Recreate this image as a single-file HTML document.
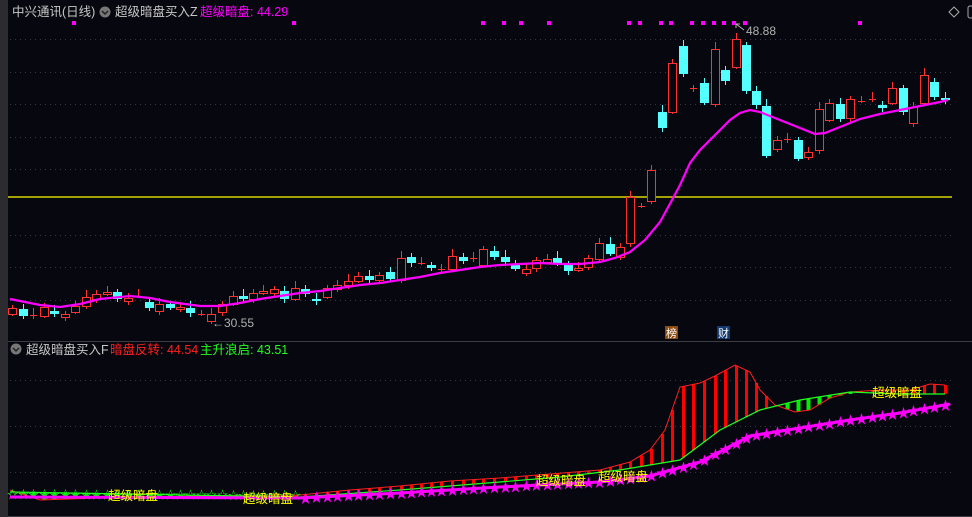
<!DOCTYPE html>
<html><head><meta charset="utf-8"><style>
html,body{margin:0;padding:0;background:#07070f;width:972px;height:517px;overflow:hidden}
svg{display:block}
text{font-family:"Liberation Sans","Noto Sans CJK SC",sans-serif}
</style></head><body>
<svg id="s" width="972" height="517" xmlns="http://www.w3.org/2000/svg">
<rect width="972" height="517" fill="#07070f"/>
<rect x="0" y="0" width="8" height="517" fill="#2b2b30"/>
<line x1="8" y1="341.5" x2="972" y2="341.5" stroke="#3c3c44"/>
<line x1="8" y1="516.5" x2="972" y2="516.5" stroke="#3c3c44"/>
<g stroke="#3a3a44" stroke-dasharray="1,4">
<line x1="10" y1="39.5" x2="952" y2="39.5"/><line x1="10" y1="72.5" x2="952" y2="72.5"/>
<line x1="10" y1="104.5" x2="952" y2="104.5"/><line x1="10" y1="137.5" x2="952" y2="137.5"/>
<line x1="10" y1="169.5" x2="952" y2="169.5"/><line x1="10" y1="235.5" x2="952" y2="235.5"/>
<line x1="10" y1="267.5" x2="952" y2="267.5"/><line x1="10" y1="300.5" x2="952" y2="300.5"/>
<line x1="10" y1="380.5" x2="952" y2="380.5"/><line x1="10" y1="426.5" x2="952" y2="426.5"/>
<line x1="10" y1="472.5" x2="952" y2="472.5"/>
</g>
<line x1="8" y1="197" x2="952" y2="197" stroke="#ffff00" stroke-width="1.2"/>
<text x="12" y="16" font-size="12.5" fill="#c8c8c8">中兴通讯(日线)</text>
<circle cx="105" cy="12" r="5.5" fill="#777"/><path d="M102 11l3 3 3-3" stroke="#222" stroke-width="1.5" fill="none"/>
<text x="115" y="16" font-size="12.5" fill="#c8c8c8">超级暗盘买入Z</text>
<text x="200" y="16" font-size="12.5" fill="#ff00ff">超级暗盘: 44.29</text>
<path d="M954 7l5 5-5 5-5-5z" stroke="#aaa" fill="none"/>
<rect x="968" y="6" width="8" height="12" rx="2" stroke="#aaa" fill="none"/>
<circle cx="16" cy="349" r="5.5" fill="#777"/><path d="M13 348l3 3 3-3" stroke="#222" stroke-width="1.5" fill="none"/>
<text x="26" y="354" font-size="12.5" fill="#c8c8c8">超级暗盘买入F</text>
<text x="110" y="354" font-size="12.5" fill="#ff2020">暗盘反转: 44.54</text>
<text x="200" y="354" font-size="12.5" fill="#20ff20">主升浪启: 43.51</text>
<rect x="665" y="326" width="13" height="13" fill="#8a4a10"/><text x="666" y="337" font-size="11" fill="#fff">榜</text>
<rect x="717" y="326" width="13" height="13" fill="#103a70"/><text x="718" y="337" font-size="11" fill="#fff">财</text>
<text x="746" y="35" font-size="12" fill="#b0b0b0">48.88</text>
<path d="M736 24l8 6M736 24l0 4M736 24l4 0" stroke="#b0b0b0" fill="none"/>
<text x="212" y="327" font-size="12" fill="#b0b0b0">←30.55</text>
<g id="c"></g>
</svg>
<script>
var S=document.getElementById('c'),h='';
function L(p){return p.map(function(q){return q.join(',')}).join(' ')}
function I(p,x){for(var i=0;i<p.length-1;i++){if(x>=p[i][0]&&x<=p[i+1][0]){var t=(x-p[i][0])/(p[i+1][0]-p[i][0]);return p[i][1]+t*(p[i+1][1]-p[i][1]);}}return x<p[0][0]?p[0][1]:p[p.length-1][1];}
var C=[[12,'r',308,314],[23,'c',309,316],[33,'x',315,315],[44,'r',307,316],[54,'c',311,314],[65,'r',314,317],[75,'r',306,312],[86,'r',297,306],[96,'r',294,299],[107,'r',292,294],[117,'c',292,299],[128,'r',298,301],[138,'x',296,296],[149,'c',302,308],[159,'r',304,311],[170,'c',304,308],[180,'r',307,309],[190,'c',308,313],[201,'x',314,314],[211,'r',314,321],[222,'r',304,312],[233,'r',296,304],[243,'c',296,299],[253,'r',293,299],[263,'r',291,293],[274,'r',289,293],[284,'c',291,299],[295,'r',288,299],[305,'c',289,294],[316,'c',299,301],[327,'r',288,297],[337,'r',285,289],[348,'r',281,285],[358,'r',276,281],[369,'c',276,280],[379,'r',275,280],[390,'c',272,279],[401,'r',258,280],[411,'c',257,263],[421,'x',263,263],[431,'c',265,268],[441,'x',269,269],[452,'r',256,269],[463,'c',257,261],[473,'x',258,258],[483,'r',249,265],[494,'c',251,257],[505,'c',257,262],[515,'c',264,269],[526,'r',269,273],[536,'r',260,268],[547,'r',259,262],[557,'c',258,263],[568,'c',265,271],[578,'r',268,270],[588,'r',258,267],[599,'r',243,259],[610,'c',244,254],[620,'r',247,257],[630,'r',197,243],[641,'x',206,206],[651,'r',170,201],[662,'c',112,128],[672,'r',63,112],[683,'c',46,74],[693,'x',88,88],[704,'c',83,103],[715,'r',49,104],[725,'c',70,81],[736,'r',39,67],[746,'c',45,91],[756,'c',91,105],[766,'c',106,156],[777,'r',140,149],[787,'x',139,139],[798,'c',140,159],[808,'r',152,157],[819,'r',109,150],[829,'r',103,120],[840,'c',104,119],[850,'r',99,118],[861,'x',101,101],[872,'x',99,99],[882,'c',105,108],[892,'r',88,103],[903,'c',88,112],[913,'r',107,123],[924,'r',75,103],[934,'c',82,97],[945,'c',98,100]];
C.forEach(function(c,i){var x=c[0],col=c[1]=='c'?'#54ffff':'#ff3232';var w=(i*7)%5+3;
h+='<line x1="'+(x+.5)+'" y1="'+(c[2]-w)+'" x2="'+(x+.5)+'" y2="'+(c[3]+(i%3+2))+'" stroke="'+col+'"/>';
if(c[1]=='x')h+='<line x1="'+(x-3)+'" y1="'+c[2]+'.5" x2="'+(x+4)+'" y2="'+c[2]+'.5" stroke="'+col+'"/>';
else if(c[1]=='c')h+='<rect x="'+(x-4)+'" y="'+c[2]+'" width="9" height="'+Math.max(2,c[3]-c[2])+'" fill="'+col+'"/>';
else h+='<rect x="'+(x-3.5)+'" y="'+(c[2]+.5)+'" width="8" height="'+Math.max(2,c[3]-c[2])+'" fill="#07070f" stroke="'+col+'"/>';});
var MA=[[10,299],[20,301],[40,305],[60,307],[80,304],[100,299],[130,296],[150,298],[170,302],[200,306],[220,306],[240,303],[260,299],[280,296],[300,293],[320,291],[340,288],[360,285],[380,283],[400,280],[420,277],[440,273],[460,270],[480,267],[500,265],[520,264],[540,263],[560,264],[580,264],[600,262],[615,258],[630,252],[645,240],[660,222],[672,200],[680,185],[690,163],[700,150],[710,140],[720,130],[730,120],[740,113],[750,110],[760,112],[780,120],[800,128],[815,134],[825,133],[840,127],[860,119],[880,114],[900,110],[920,106],[940,102],[948,100]];
h+='<polyline points="'+L(MA)+'" fill="none" stroke="#ff00ff" stroke-width="2.2"/>';
[74,294,483,504,521,549,629,640,661,671,692,703,714,724,734,745,860].forEach(function(x){h+='<rect x="'+(x-2)+'" y="21" width="4" height="4" fill="#ff00ff"/>';});
var ST=[[10,497],[300,498],[400,493],[500,487],[600,482],[650,476],[700,462],[750,436],[800,428],[850,420],[900,413],[950,404]];
var G=[[10,492],[300,497],[400,490],[500,482],[560,477],[620,470],[680,460],[720,430],[760,410],[800,400],[850,392],[900,394],[945,394]];
var R=[[10,490],[40,500],[100,498],[150,497],[200,496],[300,495],[350,490],[400,486],[450,481],[500,478],[550,474],[600,470],[630,462],[650,450],[665,430],[680,387],[700,383],[715,376],[735,365],[750,372],[760,390],[775,405],[795,412],[810,410],[830,398],[850,392],[880,390],[910,390],[930,384],[945,385]];
C.forEach(function(c){var x=c[0],r=I(R,x),g=I(G,x);
if(r<g)h+='<rect x="'+(x-1)+'" y="'+r+'" width="3" height="'+(g-r)+'" fill="#ff0000"/>';
else h+='<rect x="'+(x-1.5)+'" y="'+g+'" width="4" height="'+Math.max(2,r-g)+'" fill="#00ee00"/>';});
h+='<polyline points="'+L(R)+'" fill="none" stroke="#ff2020" stroke-width="1"/>';
h+='<polyline points="'+L(G)+'" fill="none" stroke="#20ff20" stroke-width="1.2"/>';
C.forEach(function(c){var x=c[0],y=I(ST,x);
if(x<300)h+='<text x="'+(x-5)+'" y="'+(y+1)+'" font-size="11" fill="#20ff20">☆</text>';
else h+='<text x="'+(x-6)+'" y="'+(y+5)+'" font-size="13" fill="#ff00ff">★</text>';});
h+='<polyline points="'+L(ST)+'" fill="none" stroke="#ff00ff" stroke-width="3"/>';
[[108,500],[243,503],[536,485],[598,481],[872,397]].forEach(function(p){h+='<text x="'+p[0]+'" y="'+p[1]+'" font-size="12.5" fill="#ffff00">超级暗盘</text>';});
S.innerHTML=h;
</script>
</body></html>
